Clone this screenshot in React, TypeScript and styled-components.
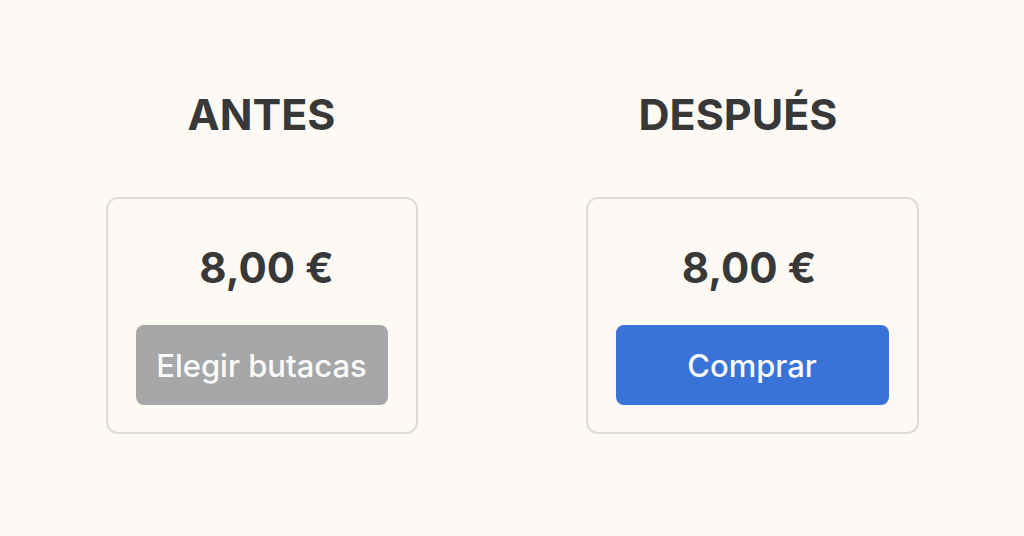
import React from "react";
import styled, { createGlobalStyle } from "styled-components";

const Global = createGlobalStyle`
  html, body {
    margin: 0;
    padding: 0;
    background: #fdfaf6;
  }
  body {
    font-family: Inter, "Noto Sans", "DejaVu Sans", sans-serif;
    color: #363636;
  }
`;

const Page = styled.main`
  width: 1024px;
  height: 536px;
  box-sizing: border-box;
  padding-top: 86px;
  display: flex;
  justify-content: center;
  gap: 168px;
`;

const Column = styled.section`
  display: flex;
  flex-direction: column;
  align-items: center;
`;

const Heading = styled.h2<{ $shift?: number }>`
  margin: 0 ${(p) => p.$shift ?? 0}px 55px 0;
  font-size: 43px;
  line-height: 56px;
  font-weight: 700;
  letter-spacing: 0;
  color: #383838;
`;

const Card = styled.div<{ $width: number }>`
  width: ${(p) => p.$width}px;
  box-sizing: border-box;
  border: 2px solid #dedcd8;
  border-radius: 12px;
  padding: 0 28px 27px;
  display: flex;
  flex-direction: column;
  align-items: stretch;
`;

const Price = styled.div<{ $offset?: number }>`
  margin: 45px 0 33px 0;
  padding-left: ${(p) => Math.max(0, p.$offset ?? 0)}px;
  padding-right: ${(p) => Math.max(0, -(p.$offset ?? 0))}px;
  text-align: center;
  font-size: 42px;
  line-height: 48px;
  font-weight: 700;
  color: #383838;
`;

const Button = styled.button<{ $variant: "muted" | "primary" }>`
  height: 80px;
  border: none;
  border-radius: 8px;
  background: ${(p) => (p.$variant === "primary" ? "#3a73d8" : "#a6a7a9")};
  color: #fafafa;
  font-family: inherit;
  font-size: 31px;
  font-weight: 500;
  cursor: pointer;
`;

export default function App() {
  return (
    <>
      <Global />
      <Page>
        <Column>
          <Heading>ANTES</Heading>
          <Card $width={312}>
            <Price $offset={10}>8,00 €</Price>
            <Button $variant="muted">Elegir butacas</Button>
          </Card>
        </Column>
        <Column>
          <Heading $shift={28}>DESPUÉS</Heading>
          <Card $width={333}>
            <Price $offset={-6}>8,00 €</Price>
            <Button $variant="primary">Comprar</Button>
          </Card>
        </Column>
      </Page>
    </>
  );
}
